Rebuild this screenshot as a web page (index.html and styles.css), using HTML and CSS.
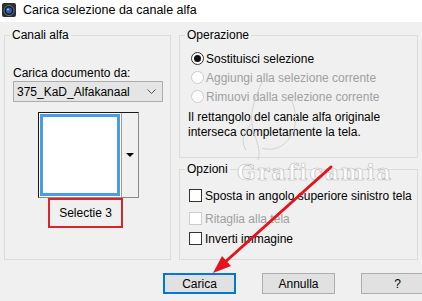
FILE: index.html
```html
<!DOCTYPE html>
<html lang="it">
<head>
    <meta charset="UTF-8">
    <title>Carica selezione da canale alfa</title>
    <link rel="stylesheet" href="styles.css">
</head>
<body>

    <div class="titlebar">
        <svg class="app-icon" width="14" height="14" viewBox="0 0 14 14">
            <rect x="0" y="0" width="14" height="14" rx="2" fill="#2b2f36"/>
            <circle cx="7" cy="7.5" r="5" fill="#1b1d22" stroke="#6d7684" stroke-width="1"/>
            <circle cx="7" cy="7.5" r="3" fill="#2c5fb8"/>
            <circle cx="6" cy="6.5" r="1" fill="#9cc3ff"/>
        </svg>
        <span class="title">Carica selezione da canale alfa</span>
    </div>

    <div class="main">
        <fieldset class="group">
            <legend>Canali alfa</legend>
            <div class="channels">
                <label class="field-label">Carica documento da:</label>
                <div class="select">
                    <span>375_KaD_Alfakanaal</span>
                    <svg width="9" height="5" viewBox="0 0 9 5"><polyline points="0.5,0.5 4.5,4.5 8.5,0.5" fill="none" stroke="#555" stroke-width="1"/></svg>
                </div>
                <div class="preview">
                    <div class="thumb"></div>
                    <div class="drop"><span class="tri"></span></div>
                </div>
                <div class="sel-name">Selectie 3</div>
            </div>
        </fieldset>

        <div class="right-col">
            <fieldset class="group operation">
                <legend>Operazione</legend>
                <div class="radios">
                    <div class="radio checked"><span class="circle"></span>Sostituisci selezione</div>
                    <div class="radio disabled"><span class="circle"></span>Aggiungi alla selezione corrente</div>
                    <div class="radio disabled"><span class="circle"></span>Rimuovi dalla selezione corrente</div>
                </div>
                <p class="note">Il rettangolo del canale alfa originale<br>interseca completamente la tela.</p>
            </fieldset>

            <fieldset class="group options">
                <legend>Opzioni</legend>
                <div class="checks">
                    <div class="check"><span class="box"></span>Sposta in angolo superiore sinistro tela</div>
                    <div class="check disabled"><span class="box"></span>Ritaglia alla tela</div>
                    <div class="check"><span class="box"></span>Inverti immagine</div>
                </div>
            </fieldset>
        </div>
    </div>

    <div class="buttons">
        <button class="btn default">Carica</button>
        <button class="btn">Annulla</button>
        <button class="btn">?</button>
    </div>

    <!-- filigrana e freccia sopra il dialogo -->
    <svg class="sketch" width="422" height="301" viewBox="0 0 422 301">
        <path d="M262 82 C256 96 250 110 252 124 C254 138 262 148 258 160 M252 124 C244 130 240 140 246 150 M262 148 C274 152 286 146 292 134 C298 122 296 108 290 98" fill="none" stroke="#d2d2d2" stroke-width="1"/>
    </svg>

    <div class="watermark">Graficamia</div>

    <svg class="arrow" width="422" height="301" viewBox="0 0 422 301">
        <line x1="331" y1="167" x2="224" y2="263" stroke="#e3151a" stroke-width="3" stroke-linecap="round"/>
        <polygon points="213,273 222,256 231,266" fill="#e3151a"/>
    </svg>

</body>
</html>
```

FILE: styles.css
```css
body {
    margin: 0;
    width: 422px;
    height: 301px;
    overflow: hidden;
    position: relative;
    background-color: #f0f0f0;
    font-family: "Liberation Sans", Arial, sans-serif;
    font-size: 12px;
    color: #000;
}

.titlebar {
    height: 22px;
    background-color: #fff;
    display: flex;
    align-items: center;
    padding-left: 2px;
}

.app-icon {
    margin-top: -2px;
}

.title {
    margin-left: 7px;
    margin-top: -2px;
    font-size: 12.5px;
}

.main {
    display: grid;
    grid-template-columns: 167px 239px;
    column-gap: 8px;
    height: 233px;
    padding: 5px 0 0 4px;
}

.group {
    margin: 0;
    padding: 0;
    min-width: 0;
    border: 1px solid #dcdcdc;
}

.group legend {
    margin-left: 5px;
    padding: 0 2px;
    line-height: 16px;
}

/* Canali alfa */
.channels {
    padding: 0 8px;
}

.field-label {
    display: block;
    margin-top: 23px;
    line-height: 15px;
}

.select {
    box-sizing: border-box;
    width: 150px;
    height: 21px;
    border: 1px solid #adadad;
    background-color: #e5e5e5;
    display: flex;
    align-items: center;
    justify-content: space-between;
    padding: 0 6px 0 3px;
}

.preview {
    box-sizing: border-box;
    display: flex;
    width: 101px;
    height: 86px;
    margin: 10px 0 0 25px;
    border: 1px solid #1a1a1a;
    border-right-color: #8a8a8a;
    border-bottom-color: #8a8a8a;
    background-color: #fff;
}

.thumb {
    flex: 1;
    margin: 1px;
    border: 3px solid #4a9bea;
    background-color: #fff;
}

.drop {
    width: 16px;
    background-color: #f0f0f0;
    border-left: 1px solid #a0a0a0;
    display: flex;
    align-items: center;
    justify-content: center;
}

.tri {
    width: 0;
    height: 0;
    border-left: 4px solid transparent;
    border-right: 4px solid transparent;
    border-top: 4px solid #000;
}

.sel-name {
    box-sizing: border-box;
    width: 75px;
    height: 30px;
    margin-left: 35px;
    border: 2px solid #d9262c;
    display: flex;
    align-items: center;
    justify-content: center;
}

/* Colonna destra */
.right-col {
    display: flex;
    flex-direction: column;
    gap: 3px;
}

.operation {
    flex: 0 0 131px;
    box-sizing: border-box;
}

.options {
    flex: 1;
}

.radios {
    padding: 6px 0 0 11px;
}

.radio {
    display: flex;
    align-items: center;
    height: 19px;
}

.circle {
    box-sizing: border-box;
    width: 13px;
    height: 13px;
    margin-right: 2px;
    border: 1px solid #333;
    border-radius: 50%;
    background-color: #fff;
    display: flex;
    align-items: center;
    justify-content: center;
}

.radio.checked .circle::after {
    content: "";
    width: 7px;
    height: 7px;
    border-radius: 50%;
    background-color: #111;
}

.radio.disabled {
    color: #a0a0a0;
}

.radio.disabled .circle {
    border-color: #cccccc;
}

.note {
    margin: 4px 0 0 0;
    padding-left: 8px;
    line-height: 15px;
}

.checks {
    padding: 11px 0 0 9px;
}

.check {
    display: flex;
    align-items: center;
    height: 15px;
}

.check + .check {
    margin-top: 8px;
}

.check:last-child {
    margin-top: 5px;
}

.box {
    box-sizing: border-box;
    width: 13px;
    height: 13px;
    margin-right: 3px;
    border: 1px solid #333;
    background-color: #fff;
}

.check.disabled {
    color: #a0a0a0;
}

.check.disabled .box {
    border-color: #cccccc;
}

/* Pulsanti */
.buttons {
    display: flex;
    gap: 26px;
    margin-top: 13px;
    padding-left: 163px;
}

.btn {
    box-sizing: border-box;
    flex: 0 0 73px;
    height: 21px;
    padding: 0;
    border: 1px solid #adadad;
    background-color: #e1e1e1;
    font-family: inherit;
    font-size: 12px;
    color: #000;
}

.btn.default {
    border: 2px solid #0078d7;
}

/* Sovrapposizioni */
.sketch,
.arrow {
    position: absolute;
    left: 0;
    top: 0;
}

.watermark {
    position: absolute;
    left: 237px;
    top: 159px;
    font-family: "DejaVu Serif", serif;
    font-weight: bold;
    font-size: 22px;
    letter-spacing: 2px;
    color: rgba(255, 255, 255, 0.85);
    -webkit-text-stroke: 0.6px #b8b8b8;
}
```
